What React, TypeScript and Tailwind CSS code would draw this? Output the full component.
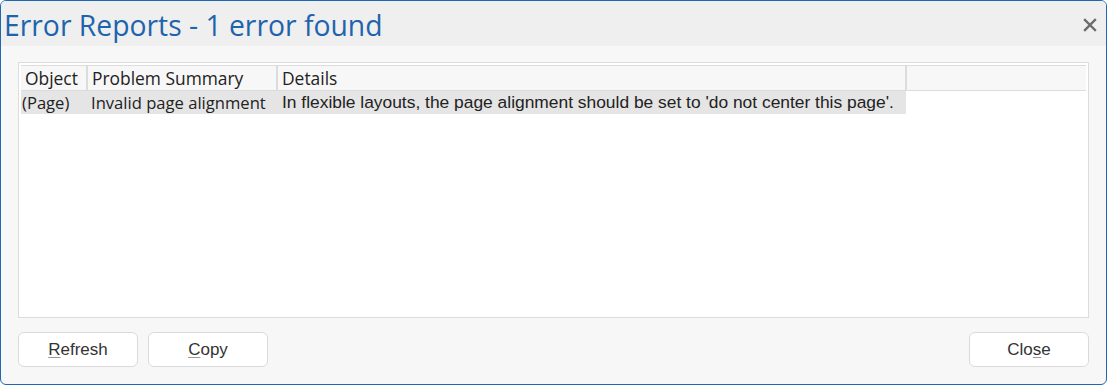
import React from 'react';

const segoe = { fontFamily: '"Open Sans", "Noto Sans", sans-serif' };

const columns = [
    { label: 'Object', w: 'w-[67px]' },
    { label: 'Problem Summary', w: 'w-[190px]' },
    { label: 'Details', w: 'w-[629px]' },
];

const Btn: React.FC<{ label: string; u: number }> = ({ label, u }) => (
    <button className="w-[120px] h-[35px] rounded-[6px] border border-[#dadada] bg-white text-[17px] text-[#333] font-['Liberation_Sans',Arial,sans-serif]">
        {label.slice(0, u)}
        <span className="underline decoration-[#999] underline-offset-2">{label[u]}</span>
        {label.slice(u + 1)}
    </button>
);

export default function App() {
    return (
        <div className="w-[1107px] h-[385px] bg-white">
            <div className="w-full h-full flex flex-col border border-[#1f68b1] rounded-[6px] overflow-hidden bg-[#f7f7f7]">
                <div className="h-[45px] shrink-0 bg-[#efefef] flex items-center justify-between pl-[3px] pr-[9px]">
                    <h1 className="text-[28.3px] text-[#1d64ad] leading-none mt-[3px]" style={segoe}>
                        Error Reports - 1 error found
                    </h1>
                    <svg width="14" height="14" viewBox="0 0 14 14" className="mt-[2px]">
                        <path d="M2 2 L12 12 M12 2 L2 12" stroke="#6b6b6b" strokeWidth="2.4" strokeLinecap="square" />
                    </svg>
                </div>
                <div className="flex-1 flex flex-col px-[17px] pt-[16px] pb-[17px]">
                    <div className="h-[256px] bg-white border border-[#dcdcdc] pt-[2px] px-[2px]">
                        <div className="flex h-[26px] bg-[#f7f7f7] border-t border-b border-[#dcdcdc] text-[17.4px] text-[#222]" style={segoe}>
                            {columns.map(c => (
                                <div key={c.label} className={`${c.w} shrink-0 border-r-2 border-[#dcdcdc] pl-[4px] leading-[24px] whitespace-nowrap`}>
                                    {c.label}
                                </div>
                            ))}
                            <div className="flex-1" />
                        </div>
                        <div className="flex h-[23px] w-[885px] bg-[#e5e5e5] text-[16.6px] text-[#222] leading-[23px] whitespace-nowrap">
                            <div className="w-[67px] shrink-0 pl-[1px]" style={segoe}>(Page)</div>
                            <div className="w-[190px] shrink-0 pl-[3px]" style={segoe}>Invalid page alignment</div>
                            <div className="flex-1 pl-[4px] text-[17.4px] font-['Liberation_Sans',Arial,sans-serif]">
                                In flexible layouts, the page alignment should be set to 'do not center this page'.
                            </div>
                        </div>
                    </div>
                    <div className="flex justify-between mt-[14px]">
                        <div className="flex gap-[10px]">
                            <Btn label="Refresh" u={0} />
                            <Btn label="Copy" u={0} />
                        </div>
                        <Btn label="Close" u={3} />
                    </div>
                </div>
            </div>
        </div>
    );
}
